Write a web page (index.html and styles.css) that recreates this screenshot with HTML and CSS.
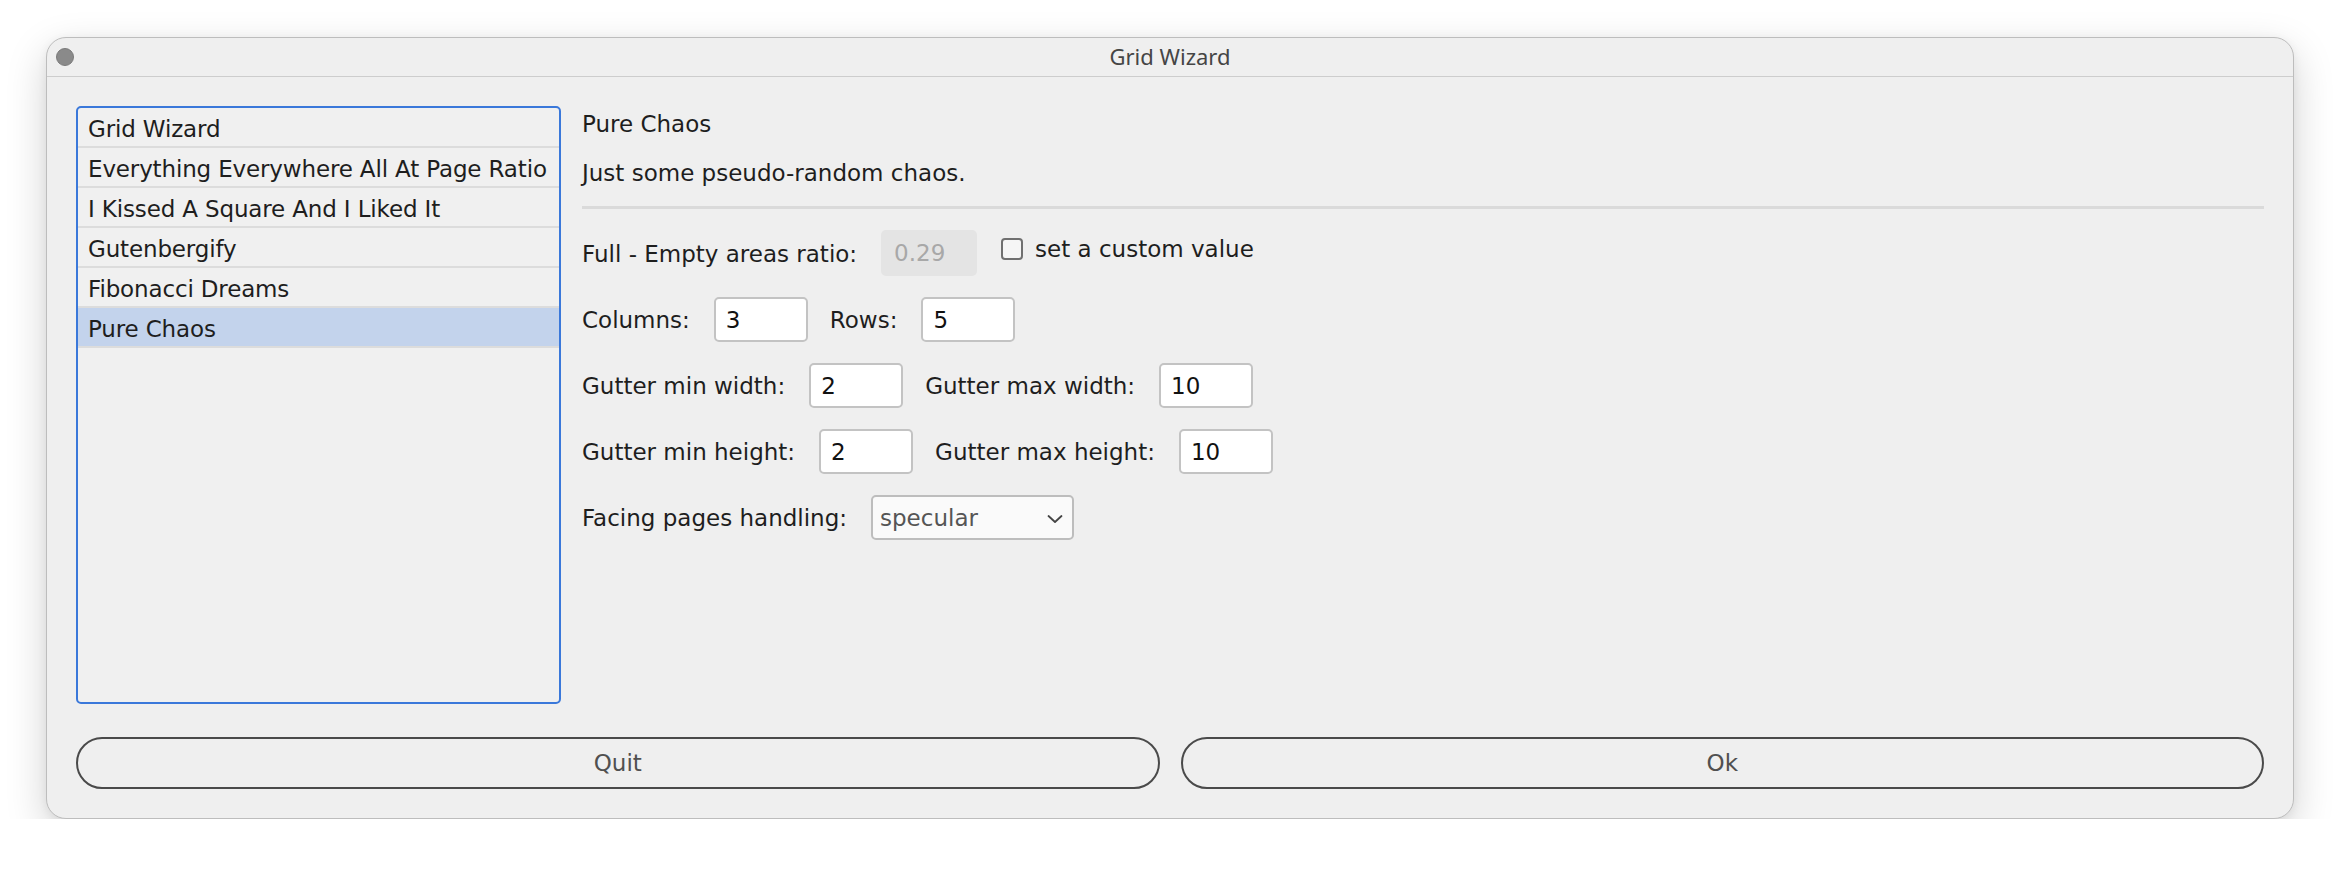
FILE: index.html
```html
<!DOCTYPE html>
<html lang="en">
<head>
<meta charset="utf-8">
<title>Grid Wizard</title>
<link rel="stylesheet" href="styles.css">
</head>
<body>
<div class="page">
  <div class="window">
    <div class="titlebar">
      <div class="controls"><span class="light"></span></div>
      <div class="title">Grid Wizard</div>
      <div class="spacer"></div>
    </div>
    <div class="content">
      <div class="main">
        <ul class="list">
          <li class="item">Grid Wizard</li>
          <li class="item">Everything Everywhere All At Page Ratio</li>
          <li class="item">I Kissed A Square And I Liked It</li>
          <li class="item">Gutenbergify</li>
          <li class="item">Fibonacci Dreams</li>
          <li class="item selected">Pure Chaos</li>
        </ul>
        <div class="panel">
          <div class="heading">Pure Chaos</div>
          <div class="desc">Just some pseudo-random chaos.</div>
          <div class="sep"></div>
          <div class="form">
            <div class="row row-ratio">
              <span class="label">Full - Empty areas ratio:</span>
              <input class="field field-disabled" type="text" value="0.29" disabled>
              <label class="check"><input class="checkbox" type="checkbox"><span>set a custom value</span></label>
            </div>
            <div class="row">
              <span class="label">Columns:</span>
              <input class="field" type="text" value="3">
              <span class="label">Rows:</span>
              <input class="field" type="text" value="5">
            </div>
            <div class="row">
              <span class="label">Gutter min width:</span>
              <input class="field" type="text" value="2">
              <span class="label">Gutter max width:</span>
              <input class="field" type="text" value="10">
            </div>
            <div class="row">
              <span class="label">Gutter min height:</span>
              <input class="field" type="text" value="2">
              <span class="label">Gutter max height:</span>
              <input class="field" type="text" value="10">
            </div>
            <div class="row">
              <span class="label">Facing pages handling:</span>
              <div class="select">
                <span class="select-text">specular</span>
                <svg class="chevron" width="16" height="10" viewBox="0 0 16 10"><path d="M1.5 2 L8 8 L14.5 2" fill="none" stroke="#444" stroke-width="1.8" stroke-linecap="round" stroke-linejoin="round"/></svg>
              </div>
            </div>
          </div>
        </div>
      </div>
      <div class="buttons">
        <button class="btn">Quit</button>
        <button class="btn">Ok</button>
      </div>
    </div>
  </div>
</div>
</body>
</html>
```
FILE: styles.css
```css
* { box-sizing: border-box; }
html, body { margin: 0; padding: 0; background: #ffffff; }
body { font-family: "DejaVu Sans", "Liberation Sans", sans-serif; font-size: 23px; color: #1e1e1e; }

.page { padding: 37px 0 0 46px; }

.window {
  width: 2248px;
  height: 782px;
  background: #efefef;
  border: 1px solid #bdbdbd;
  border-radius: 20px;
  box-shadow: 0 14px 40px rgba(0, 0, 0, 0.18), 0 2px 10px rgba(0, 0, 0, 0.06);
  display: flex;
  flex-direction: column;
  overflow: hidden;
}

.titlebar {
  height: 39px;
  border-bottom: 1px solid #cdcdcd;
  display: grid;
  grid-template-columns: 1fr auto 1fr;
  align-items: center;
}
.controls { padding-left: 9px; display: flex; align-items: center; }
.light {
  width: 18px; height: 18px; border-radius: 50%;
  background: #8a8a8a;
  border: 1px solid #7a7a7a;
}
.title {
  font-family: "Noto Sans", "DejaVu Sans", sans-serif;
  font-size: 22px;
  line-height: 30px;
  color: #454545;
  margin-top: -3px;
}

.content {
  flex: 1;
  padding: 29px;
  display: flex;
  flex-direction: column;
}

.main { flex: 1; display: flex; gap: 21px; min-height: 0; }

.list {
  list-style: none;
  margin: 0;
  padding: 0;
  width: 485px;
  border: 2px solid #3a78da;
  border-radius: 5px;
  background: #f0f0f0;
}
.item {
  height: 40px;
  padding-top: 4px;
  line-height: 34px;
  padding-left: 10px;
  border-bottom: 2px solid #dcdcdc;
  white-space: nowrap;
  color: #1e1e1e;
  letter-spacing: -0.15px;
}
.item.selected { background: #c3d3ec; }

.panel { flex: 1; display: flex; flex-direction: column; padding-top: 4px; }
.heading { line-height: 28px; }
.desc { line-height: 28px; margin-top: 21px; }
.sep { height: 3px; background: #dadada; margin-top: 19px; }

.form { display: flex; flex-direction: column; gap: 21px; margin-top: 21px; }
.row { display: flex; align-items: center; }
.label { white-space: nowrap; margin-right: 24px; }
.field {
  width: 94px;
  height: 45px;
  margin-right: 22px;
  border: 2px solid #c3c3c3;
  border-radius: 5px;
  background: #ffffff;
  font-family: "DejaVu Sans", sans-serif;
  font-size: 23px;
  color: #111;
  padding: 0 10px;
  outline: none;
}
.field-disabled {
  width: 96px;
  height: 46px;
  border: none;
  background: #e4e4e4;
  color: #a8a8a8;
  padding: 0 13px;
  margin-right: 24px;
  -webkit-text-fill-color: #a8a8a8;
  opacity: 1;
}
.row-ratio { align-items: flex-start; }
.row-ratio .label { margin-top: 11px; }
.check { display: flex; align-items: center; gap: 12px; margin-top: 6px; }
.checkbox {
  appearance: none;
  -webkit-appearance: none;
  width: 22px;
  height: 22px;
  margin: 0;
  border: 2px solid #707070;
  border-radius: 4px;
  background: #f6f6f6;
}

.select {
  width: 203px;
  height: 45px;
  border: 2px solid #bdbdbd;
  border-radius: 5px;
  background: #fafafa;
  display: flex;
  align-items: center;
  justify-content: space-between;
  padding: 0 9px 0 7px;
  color: #555;
}
.chevron { display: block; margin-top: 2px; }

.buttons { display: flex; gap: 21px; margin-top: 33px; }
.btn {
  flex: 1;
  height: 52px;
  border: 2px solid #4a4a4a;
  border-radius: 26px;
  background: transparent;
  font-family: "DejaVu Sans", sans-serif;
  font-size: 23px;
  color: #505050;
  padding: 0;
}
```
